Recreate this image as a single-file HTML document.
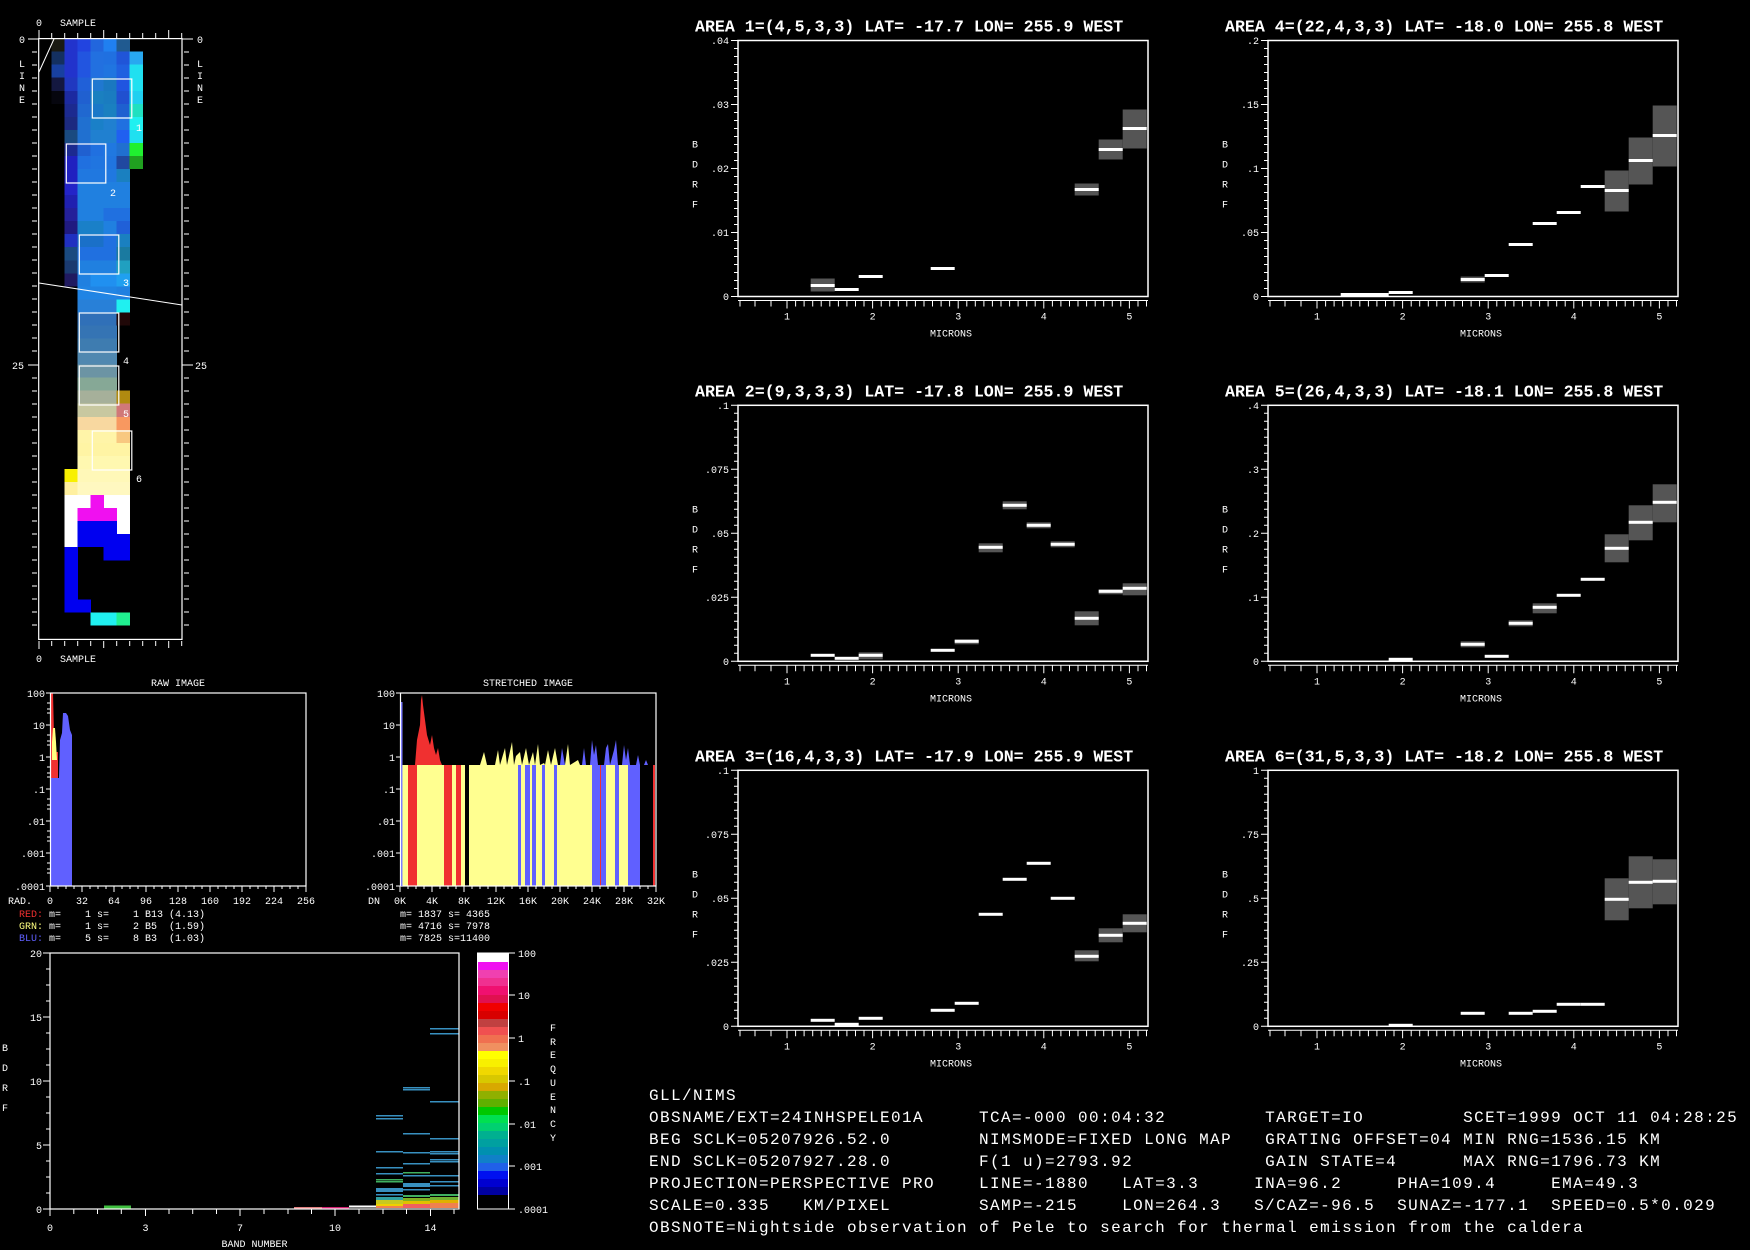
<!DOCTYPE html>
<html><head><meta charset="utf-8"><style>
html,body{margin:0;padding:0;background:#000;}
svg{display:block}
text{font-family:"Liberation Mono",monospace;fill:#fff}
.s{font-size:10px}
.t{font-size:16.6px;font-weight:bold}
.b{font-size:16px;letter-spacing:1.4px}
</style></head><body>
<svg width="1750" height="1250" viewBox="0 0 1750 1250" xmlns="http://www.w3.org/2000/svg">
<rect width="1750" height="1250" fill="#000"/>
<defs>
<g id="yt">
<path d="M-4 8H0M-4 16H0M-4 24H0M-4 32H0M-4 40H0M-4 48H0M-4 56H0M-4 72H0M-4 80H0M-4 88H0M-4 96H0M-4 104H0M-4 112H0M-4 120H0M-4 136H0M-4 144H0M-4 152H0M-4 160H0M-4 168H0M-4 176H0M-4 184H0M-4 200H0M-4 208H0M-4 216H0M-4 224H0M-4 232H0M-4 240H0M-4 248H0M-7 0H0M-7 64H0M-7 128H0M-7 192H0M-7 256H0" stroke="#fff" stroke-width="1"/>
</g>
<g id="ax">
<rect x="0" y="0" width="410" height="256" fill="none" stroke="#fff" stroke-width="1.5"/>
<use href="#yt"/>
<path d="M0 260H410M2 260v6M17 260v6M33 260v6M49 260v8M57.6 260v6M66.1 260v6M74.7 260v6M83.2 260v6M91.8 260v6M100.4 260v6M108.9 260v6M117.5 260v6M126 260v6M134.6 260v8M143.2 260v6M151.7 260v6M160.3 260v6M168.8 260v6M177.4 260v6M186 260v6M194.5 260v6M203.1 260v6M211.6 260v6M220.2 260v8M228.8 260v6M237.3 260v6M245.9 260v6M254.4 260v6M263 260v6M271.6 260v6M280.1 260v6M288.7 260v6M297.2 260v6M305.8 260v8M314.4 260v6M322.9 260v6M331.5 260v6M340 260v6M348.6 260v6M357.2 260v6M365.7 260v6M374.3 260v6M382.8 260v6M391.4 260v8M400 260v6M408.5 260v6" stroke="#fff" stroke-width="1"/>
<text class="s" x="49" y="279" text-anchor="middle">1</text>
<text class="s" x="134.6" y="279" text-anchor="middle">2</text>
<text class="s" x="220.2" y="279" text-anchor="middle">3</text>
<text class="s" x="305.8" y="279" text-anchor="middle">4</text>
<text class="s" x="391.4" y="279" text-anchor="middle">5</text>
<text class="s" x="213" y="296" text-anchor="middle">MICRONS</text>
<text class="s" x="-46" y="107">B</text>
<text class="s" x="-46" y="127">D</text>
<text class="s" x="-46" y="147">R</text>
<text class="s" x="-46" y="167">F</text>
</g>
</defs>

<!-- Plot 1 -->
<g transform="translate(738,40.5)">
<use href="#ax"/>
<text class="t" x="-43" y="-9">AREA 1=(4,5,3,3) LAT= -17.7 LON= 255.9 WEST</text>
<g class="s" text-anchor="end"><text x="-9" y="3.5">.04</text><text x="-9" y="67.5">.03</text><text x="-9" y="131.5">.02</text><text x="-9" y="195.5">.01</text><text x="-9" y="259.5">0</text></g>
<g fill="#555"><rect x="72.7" y="238" width="24" height="13"/><rect x="336.7" y="143" width="24" height="12"/><rect x="360.7" y="99" width="24" height="20"/><rect x="384.7" y="69" width="24" height="39"/></g>
<g fill="#fff"><rect x="72.7" y="243.5" width="24" height="3"/><rect x="96.7" y="247.5" width="24" height="3"/><rect x="120.7" y="234.5" width="24" height="3"/><rect x="192.7" y="226.5" width="24" height="3"/><rect x="336.7" y="147.5" width="24" height="3"/><rect x="360.7" y="107.5" width="24" height="3"/><rect x="384.7" y="86.5" width="24" height="3"/></g>
</g>

<!-- Plot 4 -->
<g transform="translate(1268,40.5)">
<use href="#ax"/>
<text class="t" x="-43" y="-9">AREA 4=(22,4,3,3) LAT= -18.0 LON= 255.8 WEST</text>
<g class="s" text-anchor="end"><text x="-9" y="3.5">.2</text><text x="-9" y="67.5">.15</text><text x="-9" y="131.5">.1</text><text x="-9" y="195.5">.05</text><text x="-9" y="259.5">0</text></g>
<g fill="#555"><rect x="192.7" y="236" width="24" height="6"/><rect x="336.7" y="130" width="24" height="41"/><rect x="360.7" y="97" width="24" height="47"/><rect x="384.7" y="65" width="24" height="61"/></g>
<g fill="#fff"><rect x="72.7" y="252.5" width="48" height="3"/><rect x="120.7" y="250.5" width="24" height="3"/><rect x="192.7" y="237.5" width="24" height="3"/><rect x="216.7" y="233.5" width="24" height="3"/><rect x="240.7" y="202.5" width="24" height="3"/><rect x="264.7" y="181.5" width="24" height="3"/><rect x="288.7" y="170.5" width="24" height="3"/><rect x="312.7" y="144.5" width="24" height="3"/><rect x="336.7" y="148.5" width="24" height="3"/><rect x="360.7" y="118.5" width="24" height="3"/><rect x="384.7" y="93.5" width="24" height="3"/></g>
</g>

<!-- Plot 2 -->
<g transform="translate(738,405.3)">
<use href="#ax"/>
<text class="t" x="-43" y="-9">AREA 2=(9,3,3,3) LAT= -17.8 LON= 255.9 WEST</text>
<g class="s" text-anchor="end"><text x="-9" y="3.5">.1</text><text x="-9" y="67.5">.075</text><text x="-9" y="131.5">.05</text><text x="-9" y="195.5">.025</text><text x="-9" y="259.5">0</text></g>
<g fill="#555"><rect x="120.7" y="247" width="24" height="7"/><rect x="216.7" y="234" width="24" height="5"/><rect x="240.7" y="138" width="24" height="9"/><rect x="264.7" y="96" width="24" height="8"/><rect x="288.7" y="117" width="24" height="6"/><rect x="312.7" y="136" width="24" height="6"/><rect x="336.7" y="206" width="24" height="14"/><rect x="360.7" y="184" width="24" height="5"/><rect x="384.7" y="178" width="24" height="12"/></g>
<g fill="#fff"><rect x="72.7" y="248.5" width="24" height="3"/><rect x="96.7" y="251.5" width="24" height="3"/><rect x="120.7" y="248.5" width="24" height="3"/><rect x="192.7" y="243.5" width="24" height="3"/><rect x="216.7" y="234.5" width="24" height="3"/><rect x="240.7" y="140.5" width="24" height="3"/><rect x="264.7" y="98.5" width="24" height="3"/><rect x="288.7" y="118.5" width="24" height="3"/><rect x="312.7" y="137.5" width="24" height="3"/><rect x="336.7" y="211.5" width="24" height="3"/><rect x="360.7" y="184.5" width="24" height="3"/><rect x="384.7" y="181.5" width="24" height="3"/></g>
</g>

<!-- Plot 5 -->
<g transform="translate(1268,405.3)">
<use href="#ax"/>
<text class="t" x="-43" y="-9">AREA 5=(26,4,3,3) LAT= -18.1 LON= 255.8 WEST</text>
<g class="s" text-anchor="end"><text x="-9" y="3.5">.4</text><text x="-9" y="67.5">.3</text><text x="-9" y="131.5">.2</text><text x="-9" y="195.5">.1</text><text x="-9" y="259.5">0</text></g>
<g fill="#555"><rect x="192.7" y="236" width="24" height="6"/><rect x="240.7" y="215" width="24" height="6"/><rect x="264.7" y="198" width="24" height="10"/><rect x="336.7" y="129" width="24" height="28"/><rect x="360.7" y="100" width="24" height="35"/><rect x="384.7" y="79" width="24" height="38"/></g>
<g fill="#fff"><rect x="120.7" y="252.5" width="24" height="3"/><rect x="192.7" y="237.5" width="24" height="3"/><rect x="216.7" y="249.5" width="24" height="3"/><rect x="240.7" y="216.5" width="24" height="3"/><rect x="264.7" y="200.5" width="24" height="3"/><rect x="288.7" y="188.5" width="24" height="3"/><rect x="312.7" y="172.5" width="24" height="3"/><rect x="336.7" y="141.5" width="24" height="3"/><rect x="360.7" y="115.5" width="24" height="3"/><rect x="384.7" y="95.5" width="24" height="3"/></g>
</g>

<!-- Plot 3 -->
<g transform="translate(738,770.3)">
<use href="#ax"/>
<text class="t" x="-43" y="-9">AREA 3=(16,4,3,3) LAT= -17.9 LON= 255.9 WEST</text>
<g class="s" text-anchor="end"><text x="-9" y="3.5">.1</text><text x="-9" y="67.5">.075</text><text x="-9" y="131.5">.05</text><text x="-9" y="195.5">.025</text><text x="-9" y="259.5">0</text></g>
<g fill="#555"><rect x="336.7" y="180" width="24" height="11"/><rect x="360.7" y="158" width="24" height="14"/><rect x="384.7" y="144" width="24" height="18"/></g>
<g fill="#fff"><rect x="72.7" y="248.5" width="24" height="3"/><rect x="96.7" y="252.5" width="24" height="3"/><rect x="120.7" y="246.5" width="24" height="3"/><rect x="192.7" y="238.5" width="24" height="3"/><rect x="216.7" y="231.5" width="24" height="3"/><rect x="240.7" y="142.5" width="24" height="3"/><rect x="264.7" y="107.5" width="24" height="3"/><rect x="288.7" y="91.5" width="24" height="3"/><rect x="312.7" y="126.5" width="24" height="3"/><rect x="336.7" y="184.5" width="24" height="3"/><rect x="360.7" y="163.5" width="24" height="3"/><rect x="384.7" y="151.5" width="24" height="3"/></g>
</g>

<!-- Plot 6 -->
<g transform="translate(1268,770.3)">
<use href="#ax"/>
<text class="t" x="-43" y="-9">AREA 6=(31,5,3,3) LAT= -18.2 LON= 255.8 WEST</text>
<g class="s" text-anchor="end"><text x="-9" y="3.5">1</text><text x="-9" y="67.5">.75</text><text x="-9" y="131.5">.5</text><text x="-9" y="195.5">.25</text><text x="-9" y="259.5">0</text></g>
<g fill="#555"><rect x="336.7" y="108" width="24" height="42"/><rect x="360.7" y="86" width="24" height="52"/><rect x="384.7" y="89" width="24" height="45"/></g>
<g fill="#fff"><rect x="120.7" y="253.5" width="24" height="3"/><rect x="192.7" y="241.5" width="24" height="3"/><rect x="240.7" y="241.5" width="24" height="3"/><rect x="264.7" y="239.5" width="24" height="3"/><rect x="288.7" y="232.5" width="24" height="3"/><rect x="312.7" y="232.5" width="24" height="3"/><rect x="336.7" y="127.5" width="24" height="3"/><rect x="360.7" y="110.5" width="24" height="3"/><rect x="384.7" y="109.5" width="24" height="3"/></g>
</g>

<!-- Image panel -->
<g>
<g shape-rendering="crispEdges">
<g transform="translate(51.7,38.6)">
<rect x="0" y="0" width="13.1" height="13.1" fill="#1a1a12"/><rect x="13" y="0" width="13.1" height="13.1" fill="#2233cc"/><rect x="26" y="0" width="13.1" height="13.1" fill="#2244e0"/><rect x="39" y="0" width="13.1" height="13.1" fill="#2266dd"/><rect x="52" y="0" width="13.1" height="13.1" fill="#2080f0"/><rect x="65" y="0" width="13.1" height="13.1" fill="#205a90"/>
<rect x="0" y="13" width="13.1" height="13.1" fill="#143060"/><rect x="13" y="13" width="13.1" height="13.1" fill="#2233cc"/><rect x="26" y="13" width="13.1" height="13.1" fill="#2255e0"/><rect x="39" y="13" width="13.1" height="13.1" fill="#2270e0"/><rect x="52" y="13" width="13.1" height="13.1" fill="#2070e0"/><rect x="65" y="13" width="13.1" height="13.1" fill="#2055d8"/><rect x="78" y="13" width="13.1" height="13.1" fill="#28a8f0"/>
<rect x="0" y="26.1" width="13.1" height="13.1" fill="#1840a0"/><rect x="13" y="26.1" width="13.1" height="13.1" fill="#2233cc"/><rect x="26" y="26.1" width="13.1" height="13.1" fill="#2255e0"/><rect x="39" y="26.1" width="13.1" height="13.1" fill="#2270e0"/><rect x="52" y="26.1" width="13.1" height="13.1" fill="#2075e0"/><rect x="65" y="26.1" width="13.1" height="13.1" fill="#2060e0"/><rect x="78" y="26.1" width="13.1" height="13.1" fill="#20e0f0"/>
<rect x="0" y="39.1" width="13.1" height="13.1" fill="#141840"/><rect x="13" y="39.1" width="13.1" height="13.1" fill="#2038c0"/><rect x="26" y="39.1" width="13.1" height="13.1" fill="#2060d8"/><rect x="39" y="39.1" width="13.1" height="13.1" fill="#2078d0"/><rect x="52" y="39.1" width="13.1" height="13.1" fill="#1a78c0"/><rect x="65" y="39.1" width="13.1" height="13.1" fill="#2055e0"/><rect x="78" y="39.1" width="13.1" height="13.1" fill="#20e0f0"/>
<rect x="0" y="52.2" width="13.1" height="13.1" fill="#06060e"/><rect x="13" y="52.2" width="13.1" height="13.1" fill="#1c2aa0"/><rect x="26" y="52.2" width="13.1" height="13.1" fill="#2060d0"/><rect x="39" y="52.2" width="13.1" height="13.1" fill="#1a80c0"/><rect x="52" y="52.2" width="13.1" height="13.1" fill="#1a7cc0"/><rect x="65" y="52.2" width="13.1" height="13.1" fill="#2050d0"/><rect x="78" y="52.2" width="13.1" height="13.1" fill="#20d0f0"/>
<rect x="13" y="65.2" width="13.1" height="13.1" fill="#1c2a90"/><rect x="26" y="65.2" width="13.1" height="13.1" fill="#2068d0"/><rect x="39" y="65.2" width="13.1" height="13.1" fill="#1a78c8"/><rect x="52" y="65.2" width="13.1" height="13.1" fill="#1a80c0"/><rect x="65" y="65.2" width="13.1" height="13.1" fill="#1e60d0"/><rect x="78" y="65.2" width="13.1" height="13.1" fill="#20e0c0"/>
<rect x="13" y="78.2" width="13.1" height="13.1" fill="#1c2a80"/><rect x="26" y="78.2" width="13.1" height="13.1" fill="#2070d0"/><rect x="39" y="78.2" width="13.1" height="13.1" fill="#1a80c8"/><rect x="52" y="78.2" width="13.1" height="13.1" fill="#2080d0"/><rect x="65" y="78.2" width="13.1" height="13.1" fill="#2070e0"/><rect x="78" y="78.2" width="13.1" height="13.1" fill="#20f0f0"/>
<rect x="13" y="91.3" width="13.1" height="13.1" fill="#1a4a80"/><rect x="26" y="91.3" width="13.1" height="13.1" fill="#2070d0"/><rect x="39" y="91.3" width="13.1" height="13.1" fill="#2080d0"/><rect x="52" y="91.3" width="13.1" height="13.1" fill="#2080d0"/><rect x="65" y="91.3" width="13.1" height="13.1" fill="#2060f0"/><rect x="78" y="91.3" width="13.1" height="13.1" fill="#20e0f0"/>
<rect x="13" y="104.3" width="13.1" height="13.1" fill="#1c2a90"/><rect x="26" y="104.3" width="13.1" height="13.1" fill="#2060d0"/><rect x="39" y="104.3" width="13.1" height="13.1" fill="#2070e0"/><rect x="52" y="104.3" width="13.1" height="13.1" fill="#2078e0"/><rect x="65" y="104.3" width="13.1" height="13.1" fill="#2070d0"/><rect x="78" y="104.3" width="13.1" height="13.1" fill="#20f030"/>
<rect x="13" y="117.4" width="13.1" height="13.1" fill="#2020c0"/><rect x="26" y="117.4" width="13.1" height="13.1" fill="#2070e0"/><rect x="39" y="117.4" width="13.1" height="13.1" fill="#2075e0"/><rect x="52" y="117.4" width="13.1" height="13.1" fill="#2075e0"/><rect x="65" y="117.4" width="13.1" height="13.1" fill="#2048a0"/><rect x="78" y="117.4" width="13.1" height="13.1" fill="#20a020"/>
<rect x="13" y="130.4" width="13.1" height="13.1" fill="#2020c0"/><rect x="26" y="130.4" width="52.1" height="13.1" fill="#2078e0"/><rect x="65" y="130.4" width="13.1" height="13.1" fill="#1a80c0"/>
<rect x="13" y="143.4" width="13.1" height="13.1" fill="#2424c8"/><rect x="26" y="143.4" width="52.1" height="13.1" fill="#2080e0"/>
<rect x="13" y="156.5" width="13.1" height="13.1" fill="#2020b0"/><rect x="26" y="156.5" width="52.1" height="13.1" fill="#2080e0"/>
<rect x="13" y="169.5" width="13.1" height="13.1" fill="#24209a"/><rect x="26" y="169.5" width="26.1" height="13.1" fill="#2080e0"/><rect x="52" y="169.5" width="26.1" height="13.1" fill="#2070e0"/>
<rect x="13" y="182.6" width="13.1" height="13.1" fill="#201a80"/><rect x="26" y="182.6" width="26.1" height="13.1" fill="#1a80c8"/><rect x="52" y="182.6" width="13.1" height="13.1" fill="#2080e0"/><rect x="65" y="182.6" width="13.1" height="13.1" fill="#2060d8"/>
<rect x="13" y="195.6" width="13.1" height="13.1" fill="#2030c0"/><rect x="26" y="195.6" width="26.1" height="13.1" fill="#1a70c8"/><rect x="52" y="195.6" width="13.1" height="13.1" fill="#2070e0"/><rect x="65" y="195.6" width="13.1" height="13.1" fill="#1a80c0"/>
<rect x="13" y="208.6" width="13.1" height="13.1" fill="#1a4a80"/><rect x="26" y="208.6" width="39.1" height="13.1" fill="#2070e0"/><rect x="65" y="208.6" width="13.1" height="13.1" fill="#1a7aa0"/>
<rect x="13" y="221.7" width="13.1" height="13.1" fill="#1a3a70"/><rect x="26" y="221.7" width="39.1" height="13.1" fill="#2080e0"/><rect x="65" y="221.7" width="13.1" height="13.1" fill="#20a0c0"/>
<rect x="13" y="234.7" width="13.1" height="13.1" fill="#201a60"/><rect x="26" y="234.7" width="13.1" height="13.1" fill="#2080e0"/><rect x="39" y="234.7" width="26.1" height="13.1" fill="#2090f0"/><rect x="65" y="234.7" width="13.1" height="13.1" fill="#20a0f0"/>
<rect x="26" y="247.8" width="39.1" height="13.1" fill="#2084e4"/><rect x="65" y="247.8" width="13.1" height="13.1" fill="#2080e0"/>
<rect x="26" y="260.8" width="39.1" height="13.1" fill="#2880d8"/><rect x="65" y="260.8" width="13.1" height="13.1" fill="#20f0f0"/>
<rect x="26" y="273.8" width="39.1" height="13.1" fill="#3070b8"/><rect x="65" y="273.8" width="13.1" height="13.1" fill="#200808"/>
<rect x="26" y="286.9" width="39.1" height="13.1" fill="#3574b4"/>
<rect x="26" y="299.9" width="39.1" height="13.1" fill="#3e7cb0"/>
<rect x="26" y="313" width="39.1" height="13.1" fill="#5088b0"/>
<rect x="26" y="326" width="39.1" height="13.1" fill="#6c94a4"/>
<rect x="26" y="339" width="39.1" height="13.1" fill="#86a896"/>
<rect x="26" y="352.1" width="39.1" height="13.1" fill="#a6b09a"/><rect x="65" y="352.1" width="13.1" height="13.1" fill="#b08a10"/>
<rect x="26" y="365.1" width="39.1" height="13.1" fill="#c8c8a0"/><rect x="65" y="365.1" width="13.1" height="13.1" fill="#d07878"/>
<rect x="26" y="378.2" width="39.1" height="13.1" fill="#f8d8a0"/><rect x="65" y="378.2" width="13.1" height="13.1" fill="#f89860"/>
<rect x="26" y="391.2" width="39.1" height="13.1" fill="#fff4a8"/><rect x="65" y="391.2" width="13.1" height="13.1" fill="#f8c880"/>
<rect x="26" y="404.2" width="52.1" height="13.1" fill="#fff4a4"/>
<rect x="26" y="417.3" width="52.1" height="13.1" fill="#fff8b0"/>
<rect x="13" y="430.3" width="13.1" height="13.1" fill="#f8f000"/><rect x="26" y="430.3" width="52.1" height="13.1" fill="#fff8b8"/>
<rect x="13" y="443.4" width="13.1" height="13.1" fill="#fff0a0"/><rect x="26" y="443.4" width="52.1" height="13.1" fill="#fff8c0"/>
<rect x="13" y="456.4" width="65.1" height="13.1" fill="#fff"/><rect x="39" y="456.4" width="13.1" height="13.1" fill="#f010f0"/>
<rect x="13" y="469.4" width="65.1" height="13.1" fill="#fff"/><rect x="26" y="469.4" width="39.1" height="13.1" fill="#f010f0"/>
<rect x="13" y="482.5" width="65.1" height="13.1" fill="#fff"/><rect x="26" y="482.5" width="39.1" height="13.1" fill="#0000f0"/>
<rect x="13" y="495.5" width="13.1" height="13.1" fill="#fff"/><rect x="26" y="495.5" width="52.1" height="13.1" fill="#0000f0"/>
<rect x="13" y="508.6" width="13.1" height="13.1" fill="#0000f0"/><rect x="52" y="508.6" width="26.1" height="13.1" fill="#0000f0"/>
<rect x="13" y="521.6" width="13.1" height="39.2" fill="#0000f0"/>
<rect x="13" y="560.8" width="26.1" height="13.1" fill="#0000f0"/>
<rect x="39" y="573.8" width="26.1" height="13.1" fill="#20f0f0"/><rect x="65" y="573.8" width="13.1" height="13.1" fill="#20f090"/>
</g>
</g>
<rect x="38.7" y="38.6" width="143.3" height="600.8" fill="none" stroke="#fff" stroke-width="1.2"/>
<path d="M39 283L182 305M39 72L54 39" stroke="#fff" stroke-width="1"/>
<g fill="none" stroke="#fff" stroke-width="1.2">
<rect x="92.3" y="79" width="39.5" height="39"/>
<rect x="66.3" y="144" width="39.5" height="39"/>
<rect x="79.3" y="235" width="39.5" height="39"/>
<rect x="79.3" y="313" width="39.5" height="39"/>
<rect x="79.3" y="366" width="39.5" height="39"/>
<rect x="92.3" y="431" width="39.5" height="39"/>
</g>
<g class="s"><text x="136" y="131">1</text><text x="110" y="196">2</text><text x="123" y="286">3</text><text x="123" y="364">4</text><text x="123" y="417">5</text><text x="136" y="482">6</text></g>
<path d="M51.7 33v5M64.7 33v5M77.7 33v5M90.7 33v5M103.7 30v8M116.7 33v5M129.7 33v5M142.7 33v5M155.7 33v5M168.7 30v8M181.7 33v5M51.7 641v5M64.7 641v5M77.7 641v5M90.7 641v5M103.7 641v7M116.7 641v5M129.7 641v5M142.7 641v5M155.7 641v5M168.7 641v7M181.7 641v5M39 30v9M39 641v8" stroke="#fff" stroke-width="1"/>
<path d="M32 52h5M32 65h5M32 78h5M32 91h5M32 104h5M32 117h5M32 130h5M32 143h5M32 156h5M32 169h5M32 182h5M32 195h5M32 208h5M32 221h5M32 234h5M32 247h5M32 260h5M32 273h5M32 286h5M32 299h5M32 312h5M32 325h5M32 338h5M32 351h5M32 378h5M32 391h5M32 404h5M32 417h5M32 430h5M32 443h5M32 456h5M32 469h5M32 482h5M32 495h5M32 508h5M32 521h5M32 534h5M32 547h5M32 560h5M32 573h5M32 586h5M32 599h5M32 612h5M32 625h5M28 39h11M28 365h11" stroke="#fff" stroke-width="1"/>
<path d="M184 52h5M184 65h5M184 78h5M184 91h5M184 104h5M184 117h5M184 130h5M184 143h5M184 156h5M184 169h5M184 182h5M184 195h5M184 208h5M184 221h5M184 234h5M184 247h5M184 260h5M184 273h5M184 286h5M184 299h5M184 312h5M184 325h5M184 338h5M184 351h5M184 378h5M184 391h5M184 404h5M184 417h5M184 430h5M184 443h5M184 456h5M184 469h5M184 482h5M184 495h5M184 508h5M184 521h5M184 534h5M184 547h5M184 560h5M184 573h5M184 586h5M184 599h5M184 612h5M184 625h5M182 39h11M182 365h11" stroke="#fff" stroke-width="1"/>
<g class="s"><text x="36" y="26">0</text><text x="60" y="26">SAMPLE</text><text x="36" y="662">0</text><text x="60" y="662">SAMPLE</text>
<text x="19" y="43">0</text><text x="197" y="43">0</text><text x="12" y="369">25</text><text x="195" y="369">25</text>
<text x="19" y="67">L</text><text x="19" y="79">I</text><text x="19" y="91">N</text><text x="19" y="103">E</text>
<text x="197" y="67">L</text><text x="197" y="79">I</text><text x="197" y="91">N</text><text x="197" y="103">E</text></g>
</g>

<!-- RAW histogram -->
<g>
<text class="s" x="178" y="686" text-anchor="middle">RAW IMAGE</text>
<polygon points="50,886 50,778 59,778 60,740 62,733 63,713 66,713 68,716 70,730 72,735 72,886" fill="#6060ff"/>
<polygon points="50,778 50,693 53,693 54,735 56,752 58,752 58,778" fill="#f03030"/>
<polygon points="52,742 53,728 55,728 56,742 57,760 52,760" fill="#ffff80"/>
<rect x="50.5" y="693" width="255.5" height="193" fill="none" stroke="#fff" stroke-width="1.2"/>
<path d="M46 693h4M46 725h4M46 757h4M46 789h4M46 821h4M46 853h4M46 886h4M47 703h3M47 709h3M47 713h3M47 735h3M47 741h3M47 745h3M47 767h3M47 773h3M47 777h3M47 799h3M47 805h3M47 809h3M47 831h3M47 837h3M47 841h3M47 863h3M47 869h3M47 873h3M50 886v6M58 886v3M66 886v3M74 886v3M82 886v6M90 886v3M98 886v3M106 886v3M114 886v6M122 886v3M130 886v3M138 886v3M146 886v6M154 886v3M162 886v3M170 886v3M178 886v6M186 886v3M194 886v3M202 886v3M210 886v6M218 886v3M226 886v3M234 886v3M242 886v6M250 886v3M258 886v3M266 886v3M274 886v6M282 886v3M290 886v3M298 886v3M306 886v6" stroke="#fff" stroke-width="1"/>
<g class="s" text-anchor="end"><text x="45" y="697">100</text><text x="45" y="729">10</text><text x="45" y="761">1</text><text x="45" y="793">.1</text><text x="45" y="825">.01</text><text x="45" y="857">.001</text><text x="45" y="890">.0001</text></g>
<g class="s" text-anchor="middle"><text x="20" y="904">RAD.</text><text x="50" y="904">0</text><text x="82" y="904">32</text><text x="114" y="904">64</text><text x="146" y="904">96</text><text x="178" y="904">128</text><text x="210" y="904">160</text><text x="242" y="904">192</text><text x="274" y="904">224</text><text x="306" y="904">256</text></g>
<g class="s"><text x="19" y="917" xml:space="preserve"><tspan fill="#f03030">RED:</tspan> m=    1 s=    1 B13 (4.13)</text>
<text x="19" y="929" xml:space="preserve"><tspan fill="#ffff80">GRN:</tspan> m=    1 s=    2 B5  (1.59)</text>
<text x="19" y="941" xml:space="preserve"><tspan fill="#6060ff">BLU:</tspan> m=    5 s=    8 B3  (1.03)</text></g>
</g>

<!-- STRETCHED histogram -->
<g>
<text class="s" x="528" y="686" text-anchor="middle">STRETCHED IMAGE</text>
<rect x="400" y="765" width="240" height="121" fill="#ffff90"/>
<g fill="#f03030"><rect x="408" y="765" width="9" height="121"/><rect x="444" y="765" width="8" height="121"/><rect x="456" y="765" width="5" height="121"/><rect x="600" y="765" width="1" height="121"/><rect x="653" y="765" width="2" height="121"/></g>
<rect x="465" y="765" width="4" height="121" fill="#000"/>
<g fill="#6060ff"><rect x="518" y="765" width="3" height="121"/><rect x="525" y="765" width="5" height="121"/><rect x="532" y="765" width="4" height="121"/><rect x="542" y="765" width="3" height="121"/><rect x="554" y="765" width="3" height="121"/><rect x="592" y="765" width="8" height="121"/><rect x="601" y="765" width="5" height="121"/><rect x="615" y="765" width="4" height="121"/><rect x="628" y="765" width="12" height="121"/></g>
<polygon points="415,765 417,740 420,725 421,700 422,695 423,705 425,720 427,735 430,745 432,735 434,748 436,755 438,748 440,760 442,765" fill="#f03030"/>
<polygon points="480,765 484,752 487,765 495,765 498,750 500,765 505,748 507,765 512,742 514,765 516,756 520,752 522,765 526,748 529,765 533,752 535,765 538,744 540,765 544,763 545,765" fill="#ffff90"/>
<polygon points="545,765 548,750 551,765 555,748 558,765 565,765 568,744 570,765 578,760 580,765" fill="#ffff90"/>
<polygon points="560,765 562,748 565,765 582,765 584,748 586,765 590,765 592,740 594,755 596,745 598,765 604,765 606,748 608,744 610,765 614,750 616,740 618,765 622,765 624,745 626,760 628,748 630,765 636,765 638,755 640,765 644,765 646,760 648,765" fill="#6060ff"/>
<rect x="400.5" y="693" width="255.5" height="193" fill="none" stroke="#fff" stroke-width="1.2"/>
<rect x="401" y="702" width="1.5" height="184" fill="#8080ff"/>
<path d="M396 693h4M396 725h4M396 757h4M396 789h4M396 821h4M396 853h4M396 886h4M400 886v6M408 886v3M416 886v3M424 886v3M432 886v6M440 886v3M448 886v3M456 886v3M464 886v6M472 886v3M480 886v3M488 886v3M496 886v6M504 886v3M512 886v3M520 886v3M528 886v6M536 886v3M544 886v3M552 886v3M560 886v6M568 886v3M576 886v3M584 886v3M592 886v6M600 886v3M608 886v3M616 886v3M624 886v6M632 886v3M640 886v3M648 886v3M656 886v6" stroke="#fff" stroke-width="1"/>
<g class="s" text-anchor="end"><text x="395" y="697">100</text><text x="395" y="729">10</text><text x="395" y="761">1</text><text x="395" y="793">.1</text><text x="395" y="825">.01</text><text x="395" y="857">.001</text><text x="395" y="890">.0001</text></g>
<g class="s" text-anchor="middle"><text x="374" y="904">DN</text><text x="400" y="904">0K</text><text x="432" y="904">4K</text><text x="464" y="904">8K</text><text x="496" y="904">12K</text><text x="528" y="904">16K</text><text x="560" y="904">20K</text><text x="592" y="904">24K</text><text x="624" y="904">28K</text><text x="656" y="904">32K</text></g>
<g class="s"><text x="400" y="917" xml:space="preserve">m= 1837 s= 4365</text><text x="400" y="929" xml:space="preserve">m= 4716 s= 7978</text><text x="400" y="941" xml:space="preserve">m= 7825 s=11400</text></g>
</g>

<!-- BDRF band plot -->
<g>
<rect x="104" y="1205.5" width="27" height="3.5" fill="#40c040"/>
<rect x="294" y="1207" width="55" height="1.5" fill="#e08080"/>
<rect x="322" y="1207" width="27" height="1.5" fill="#d02070"/>
<rect x="349" y="1205.5" width="27" height="2" fill="#fff"/>
<g fill="#3890c0">
<rect x="376" y="1115" width="27" height="1.5"/><rect x="376" y="1118" width="27" height="1.5"/><rect x="376" y="1151" width="27" height="1.5"/><rect x="376" y="1167" width="27" height="1.5"/><rect x="376" y="1173" width="27" height="1.5"/><rect x="376" y="1188" width="27" height="4"/><rect x="376" y="1194" width="27" height="1.5"/>
<rect x="403" y="1087" width="27" height="1.5"/><rect x="403" y="1089" width="27" height="1.5"/><rect x="403" y="1133" width="27" height="1.5"/><rect x="403" y="1152" width="27" height="1.5"/><rect x="403" y="1163" width="27" height="1.5"/><rect x="403" y="1175" width="27" height="1.5"/><rect x="403" y="1183" width="27" height="4"/><rect x="403" y="1189" width="27" height="1.5"/>
<rect x="430" y="1028" width="29" height="1.5"/><rect x="430" y="1033" width="29" height="1.5"/><rect x="430" y="1101" width="29" height="1.5"/><rect x="430" y="1138" width="29" height="1.5"/><rect x="430" y="1151" width="29" height="1.5"/><rect x="430" y="1153" width="29" height="1.5"/><rect x="430" y="1159" width="29" height="1.5"/><rect x="430" y="1161" width="29" height="1.5"/><rect x="430" y="1175" width="29" height="1.5"/><rect x="430" y="1181" width="29" height="1.5"/><rect x="430" y="1185" width="29" height="1.5"/>
</g>
<g fill="#40b060"><rect x="376" y="1179" width="27" height="1.5"/><rect x="376" y="1181" width="27" height="1.5"/><rect x="403" y="1172" width="27" height="1.5"/><rect x="430" y="1194" width="29" height="2"/><rect x="403" y="1195" width="27" height="2"/></g>
<rect x="376" y="1197" width="27" height="3" fill="#30a0a0"/>
<rect x="376" y="1200" width="27" height="4" fill="#c8c820"/>
<rect x="376" y="1204" width="27" height="2" fill="#f0d000"/>
<rect x="376" y="1206" width="27" height="2" fill="#f08050"/>
<rect x="403" y="1198" width="27" height="3" fill="#80b020"/>
<rect x="403" y="1201" width="27" height="3" fill="#e0c000"/>
<rect x="403" y="1204" width="27" height="4" fill="#f06060"/>
<rect x="430" y="1197" width="29" height="3" fill="#70b030"/>
<rect x="430" y="1200" width="29" height="3" fill="#e0b000"/>
<rect x="430" y="1203" width="29" height="5" fill="#f08050"/>
<rect x="50" y="953" width="409" height="256" fill="none" stroke="#fff" stroke-width="1.2"/>
<path d="M46 969h4M46 985h4M46 1001h4M46 1033h4M46 1049h4M46 1065h4M46 1097h4M46 1113h4M46 1129h4M46 1161h4M46 1177h4M46 1193h4M43 953h7M43 1017h7M43 1081h7M43 1145h7M43 1209h7" stroke="#fff" stroke-width="1"/>
<path d="M50 1209v7M73.8 1209v5M97.5 1209v5M121.3 1209v5M145.5 1209v7M169 1209v5M192.7 1209v5M216.5 1209v5M240 1209v7M264 1209v5M288 1209v5M311.5 1209v5M335 1209v7M359 1209v5M383 1209v5M406.5 1209v5M430.5 1209v7M454 1209v5" stroke="#fff" stroke-width="1"/>
<g class="s" text-anchor="end"><text x="42" y="957">20</text><text x="42" y="1021">15</text><text x="42" y="1085">10</text><text x="42" y="1149">5</text><text x="42" y="1213">0</text></g>
<g class="s" text-anchor="middle"><text x="50" y="1231">0</text><text x="145.5" y="1231">3</text><text x="240" y="1231">7</text><text x="335" y="1231">10</text><text x="430.5" y="1231">14</text><text x="254.5" y="1247">BAND NUMBER</text></g>
<g class="s"><text x="2" y="1051">B</text><text x="2" y="1071">D</text><text x="2" y="1091">R</text><text x="2" y="1111">F</text></g>
</g>

<!-- colorbar -->
<g shape-rendering="crispEdges">
<rect x="478" y="953" width="30" height="9" fill="#ffffff"/>
<rect x="478" y="962" width="30" height="8" fill="#f010f0"/>
<rect x="478" y="970" width="30" height="8" fill="#f040b0"/>
<rect x="478" y="978" width="30" height="8" fill="#f03090"/>
<rect x="478" y="986" width="30" height="9" fill="#f01070"/>
<rect x="478" y="995" width="30" height="8" fill="#e01050"/>
<rect x="478" y="1003" width="30" height="8" fill="#f00000"/>
<rect x="478" y="1011" width="30" height="8" fill="#d80000"/>
<rect x="478" y="1019" width="30" height="8" fill="#c04040"/>
<rect x="478" y="1027" width="30" height="8" fill="#f05050"/>
<rect x="478" y="1035" width="30" height="8" fill="#f07050"/>
<rect x="478" y="1043" width="30" height="8" fill="#f09060"/>
<rect x="478" y="1051" width="30" height="8" fill="#ffff00"/>
<rect x="478" y="1059" width="30" height="8" fill="#f8f000"/>
<rect x="478" y="1067" width="30" height="8" fill="#f0d800"/>
<rect x="478" y="1075" width="30" height="8" fill="#d8c800"/>
<rect x="478" y="1083" width="30" height="8" fill="#d8a800"/>
<rect x="478" y="1091" width="30" height="8" fill="#90b000"/>
<rect x="478" y="1099" width="30" height="8" fill="#60b000"/>
<rect x="478" y="1107" width="30" height="8" fill="#00c800"/>
<rect x="478" y="1115" width="30" height="8" fill="#00e050"/>
<rect x="478" y="1123" width="30" height="8" fill="#00d070"/>
<rect x="478" y="1131" width="30" height="8" fill="#00b090"/>
<rect x="478" y="1139" width="30" height="8" fill="#00a0a0"/>
<rect x="478" y="1147" width="30" height="8" fill="#0090b0"/>
<rect x="478" y="1155" width="30" height="8" fill="#1080c8"/>
<rect x="478" y="1163" width="30" height="8" fill="#2060e8"/>
<rect x="478" y="1171" width="30" height="8" fill="#0010f0"/>
<rect x="478" y="1179" width="30" height="8" fill="#0000d0"/>
<rect x="478" y="1187" width="30" height="8" fill="#0000a0"/>
<rect x="478" y="1195" width="30" height="14" fill="#000"/>
<rect x="477.5" y="953" width="31" height="256" fill="none" stroke="#fff" stroke-width="1.2"/>
<path d="M509 953h6M509 995h6M509 1038h6M509 1081h6M509 1124h6M509 1166h6M509 1209h6" stroke="#fff" stroke-width="1"/>
<g class="s"><text x="518" y="957">100</text><text x="518" y="999">10</text><text x="518" y="1042">1</text><text x="518" y="1085">.1</text><text x="518" y="1128">.01</text><text x="518" y="1170">.001</text><text x="518" y="1213">.0001</text>
<text x="550" y="1031">F</text><text x="550" y="1045">R</text><text x="550" y="1058">E</text><text x="550" y="1072">Q</text><text x="550" y="1086">U</text><text x="550" y="1100">E</text><text x="550" y="1113">N</text><text x="550" y="1127">C</text><text x="550" y="1141">Y</text></g>
</g>

<!-- bottom text -->
<g class="b">
<text x="649" y="1100">GLL/NIMS</text>
<text x="649" y="1122" xml:space="preserve">OBSNAME/EXT=24INHSPELE01A     TCA=-000 00:04:32         TARGET=IO         SCET=1999 OCT 11 04:28:25</text>
<text x="649" y="1144" xml:space="preserve">BEG SCLK=05207926.52.0        NIMSMODE=FIXED LONG MAP   GRATING OFFSET=04 MIN RNG=1536.15 KM</text>
<text x="649" y="1166" xml:space="preserve">END SCLK=05207927.28.0        F(1 u)=2793.92            GAIN STATE=4      MAX RNG=1796.73 KM</text>
<text x="649" y="1188" xml:space="preserve">PROJECTION=PERSPECTIVE PRO    LINE=-1880   LAT=3.3     INA=96.2     PHA=109.4     EMA=49.3</text>
<text x="649" y="1210" xml:space="preserve">SCALE=0.335   KM/PIXEL        SAMP=-215    LON=264.3   S/CAZ=-96.5  SUNAZ=-177.1  SPEED=0.5*0.029</text>
<text x="649" y="1232" xml:space="preserve">OBSNOTE=Nightside observation of Pele to search for thermal emission from the caldera</text>
</g>
</svg>
</body></html>
